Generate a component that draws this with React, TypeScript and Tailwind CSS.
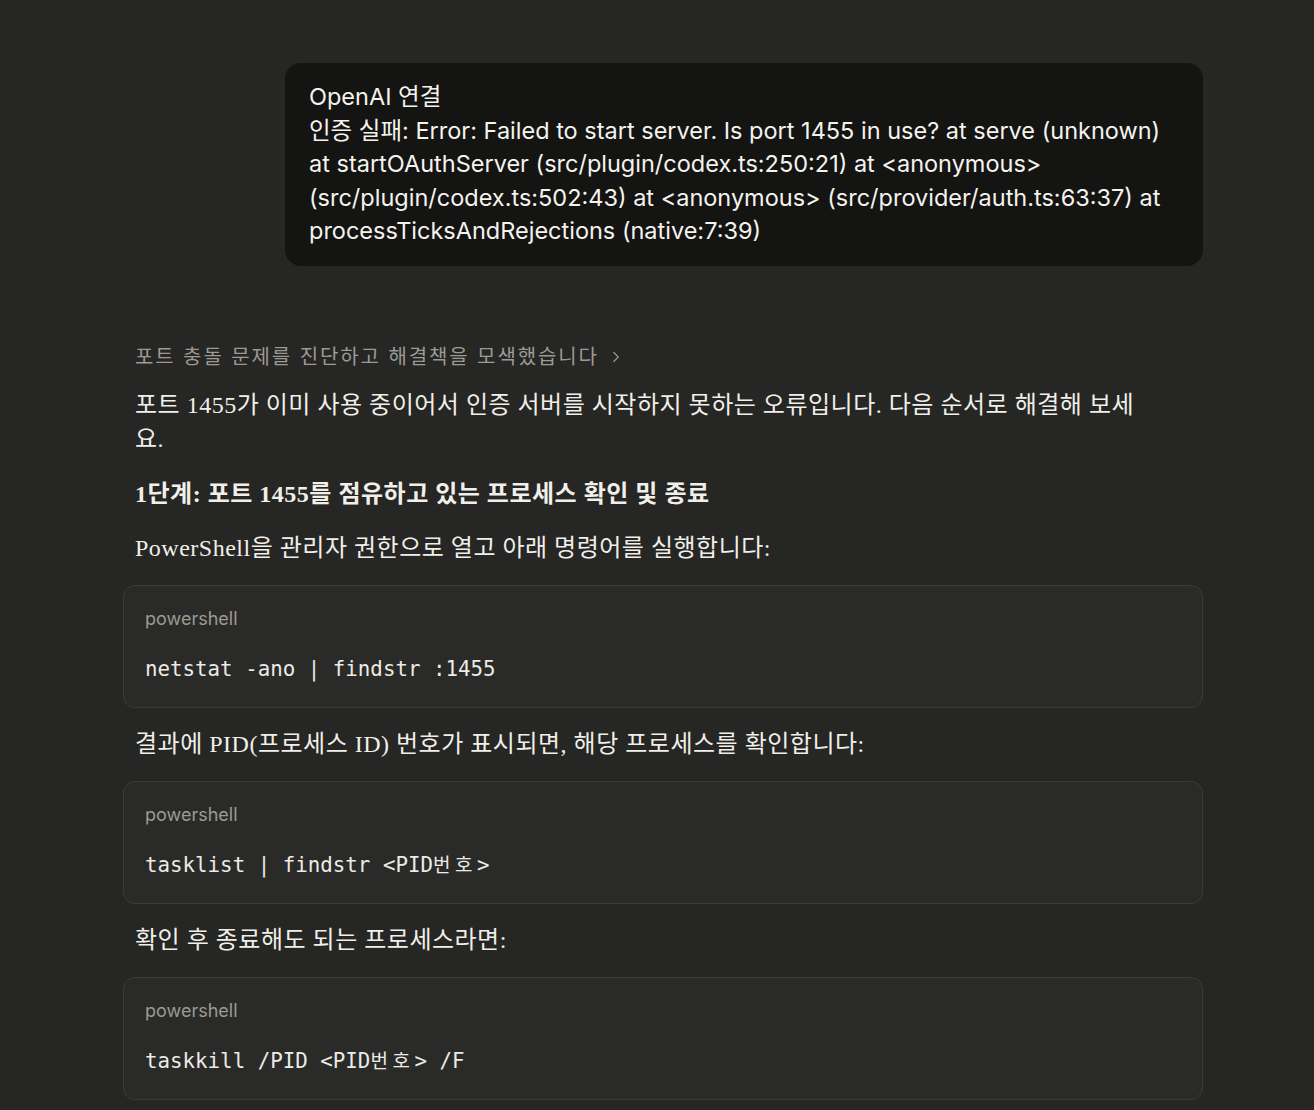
import { ChevronRight } from 'lucide-react'

const sans = 'font-["Inter","Noto_Sans_CJK_KR",sans-serif]'
const serif = 'font-["Liberation_Serif","Noto_Sans_CJK_KR",serif]'
const body = `${serif} text-[24px] tracking-[0.5px] leading-[34px] text-[#f0efe9]`

function Code({ text }: { text: string }) {
  // hangul sits wider than one mono column in the reference
  return (
    <>
      {text.split(/([가-힣])/).map((part, i) =>
        /[가-힣]/.test(part) ? (
          <span key={i} className="inline-block w-[22px] text-[19px]">
            {part}
          </span>
        ) : (
          <span key={i}>{part}</span>
        ),
      )}
    </>
  )
}

function CodeBlock({ code }: { code: string }) {
  return (
    <div className="rounded-xl border border-[#3b3b38] bg-[#2a2a28] px-[21px] pt-5 pb-[23px]">
      <div className={`${sans} text-[18px] leading-[26px] text-[#9c9a94]`}>powershell</div>
      <pre className='mt-[22px] font-["DejaVu_Sans_Mono","Noto_Sans_CJK_KR",monospace] text-[20.8px] leading-[30px] text-[#ecebe6]'>
        <Code text={code} />
      </pre>
    </div>
  )
}

export default function App() {
  return (
    <div className="min-h-[1110px] bg-[#262624] pt-[63px] pl-[123px]">
      <div className="w-[1080px]">
        <div className="flex justify-end">
          <div
            className={`max-w-[85%] rounded-2xl bg-[#141413] px-6 pt-[17px] pb-[18px] ${sans} text-[23.5px] leading-[33.5px] text-[#f4f3ee]`}
          >
            <div>OpenAI 연결</div>
            <div>
              인증 실패: Error: Failed to start server. Is port 1455 in use? at serve (unknown) at
              startOAuthServer (src/plugin/codex.ts:250:21) at &lt;anonymous&gt;
              (src/plugin/codex.ts:502:43) at &lt;anonymous&gt; (src/provider/auth.ts:63:37) at
              processTicksAndRejections (native:7:39)
            </div>
          </div>
        </div>

        <div className="mt-[76px] flex flex-col gap-5">
          <div
            className={`flex items-center gap-2 px-3 ${sans} text-[20px] tracking-[1.9px] leading-[30px] text-[#9c9a94]`}
          >
            <span>포트 충돌 문제를 진단하고 해결책을 모색했습니다</span>
            <ChevronRight size={18} strokeWidth={1.5} />
          </div>

          <div className={`-mt-[4px] flex flex-col gap-5 px-3 ${body}`}>
            <p className="max-w-[1012px]">
              포트 1455가 이미 사용 중이어서 인증 서버를 시작하지 못하는 오류입니다. 다음 순서로 해결해 보세요.
            </p>
            <p className="mt-px font-bold">1단계: 포트 1455를 점유하고 있는 프로세스 확인 및 종료</p>
            <p>PowerShell을 관리자 권한으로 열고 아래 명령어를 실행합니다:</p>
          </div>

          <CodeBlock code="netstat -ano | findstr :1455" />

          <p className={`-mt-px px-3 ${body}`}>
            결과에 PID(프로세스 ID) 번호가 표시되면, 해당 프로세스를 확인합니다:
          </p>

          <CodeBlock code="tasklist | findstr <PID번호>" />

          <p className={`-mt-px px-3 ${body}`}>확인 후 종료해도 되는 프로세스라면:</p>

          <CodeBlock code="taskkill /PID <PID번호> /F" />
        </div>
      </div>
    </div>
  )
}
